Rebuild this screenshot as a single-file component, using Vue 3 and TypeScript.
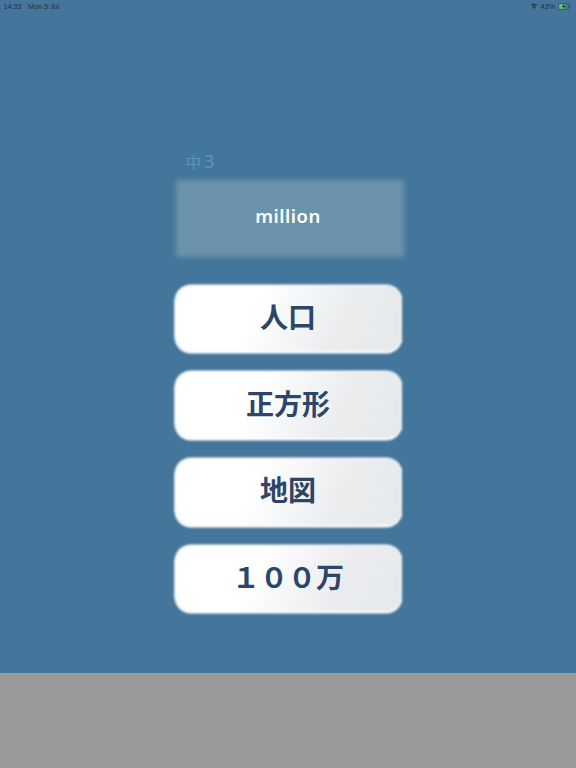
<script setup lang="ts">
const choices = ['人口', '正方形', '地図', '１００万']
</script>

<template>
  <div class="screen">
    <div class="stage">
      <div class="status-bar">
        <div class="status-left">
          <span>14:33</span>
          <span>Mon 5 Jul</span>
        </div>
        <div class="status-right">
          <svg class="wifi" width="8" height="6" viewBox="0 0 16 12">
            <path d="M8 12 L5.4 8.9 A4 4 0 0 1 10.6 8.9 Z" fill="#1c2f45" />
            <path d="M3.6 6.8 A7 7 0 0 1 12.4 6.8 L11.3 8.1 A5.4 5.4 0 0 0 4.7 8.1 Z" fill="#1c2f45" />
            <path d="M1.3 4.3 A10.4 10.4 0 0 1 14.7 4.3 L13.5 5.7 A8.6 8.6 0 0 0 2.5 5.7 Z" fill="#1c2f45" />
          </svg>
          <span class="percent">43%</span>
          <svg class="battery" width="13" height="7" viewBox="0 0 13 7">
            <rect x="0.3" y="0.3" width="10.6" height="6.4" rx="1.6" fill="none" stroke="#2c4a63" stroke-width="0.6" />
            <rect x="1.2" y="1.2" width="6" height="4.6" rx="0.8" fill="#5fd068" />
            <rect x="11.4" y="2.3" width="1" height="2.4" rx="0.5" fill="#2c4a63" />
            <path d="M6.4 0.6 L3.8 3.9 H5.6 L4.9 6.4 L7.6 3 H5.8 Z" fill="#14283a" />
          </svg>
        </div>
      </div>

      <div class="quiz">
        <div class="grade">中<span class="grade-num">3</span></div>
        <div class="word-card"><span>million</span></div>
        <div class="choices">
          <button v-for="choice in choices" :key="choice" class="choice">
            <span>{{ choice }}</span>
          </button>
        </div>
      </div>
    </div>
    <div class="footer"></div>
  </div>
</template>

<style scoped>
.screen {
  width: 576px;
  height: 768px;
  display: flex;
  flex-direction: column;
  overflow: hidden;
  font-family: "Noto Sans CJK JP", "Noto Sans", sans-serif;
}

.stage {
  height: 673px;
  background: #44769b;
  display: flex;
  flex-direction: column;
}

.footer {
  flex: 1;
  background: #9a9a9a;
}

.status-bar {
  height: 12px;
  padding: 0 5px 0 3.5px;
  display: flex;
  justify-content: space-between;
  align-items: center;
  font-family: "Liberation Sans", Arial, sans-serif;
  font-size: 7.2px;
  color: #1c2f45;
}

.status-left {
  display: flex;
  gap: 6.5px;
}

.status-right {
  display: flex;
  align-items: center;
  gap: 3px;
}

.quiz {
  width: 228px;
  margin: 0 auto;
  padding-top: 139px;
  display: flex;
  flex-direction: column;
}

.grade {
  margin-left: 12px;
  height: 30px;
  font-size: 15px;
  line-height: 20px;
  color: #5b96bf;
}

.grade-num {
  margin-left: 3px;
  font-family: "Noto Sans", sans-serif;
  font-size: 18px;
}

.word-card {
  position: relative;
  margin: 0 -1px 0 3px;
  height: 75px;
  padding-bottom: 7px;
  box-sizing: border-box;
  display: flex;
  align-items: center;
  justify-content: center;
  font-family: "Noto Sans", sans-serif;
  font-size: 18.5px;
  font-weight: 600;
  letter-spacing: 0.5px;
  color: #fff;
  isolation: isolate;
}

/* soft edge, the whole card looks slightly out of focus */
.word-card::before {
  content: '';
  position: absolute;
  inset: -1px;
  z-index: -1;
  background: #6b92ab;
  filter: blur(2.5px);
}

.word-card span {
  margin-right: 4px;
}

.choices {
  margin-top: 28px;
  display: flex;
  flex-direction: column;
  gap: 18.3px;
}

.choice {
  position: relative;
  height: 68.5px;
  padding: 0 0 5px;
  border: 0;
  background: none;
  font-family: inherit;
  font-size: 28px;
  font-weight: 600;
  color: #2c4569;
  isolation: isolate;
}

/* white rim that bleeds into the blue, a bit heavier along the bottom */
.choice::before {
  content: '';
  position: absolute;
  inset: 1.5px;
  z-index: -1;
  border-radius: 15px;
  background: linear-gradient(115deg, #ffffff 35%, #ebedef 70%, #e6e9eb 100%);
  box-shadow: 0 0 0 1.5px #fff, 0 1px 0 1.5px #fff;
  filter: blur(1.2px);
}
</style>

<style>
html,
body {
  margin: 0;
  background: #9a9a9a;
}
</style>
